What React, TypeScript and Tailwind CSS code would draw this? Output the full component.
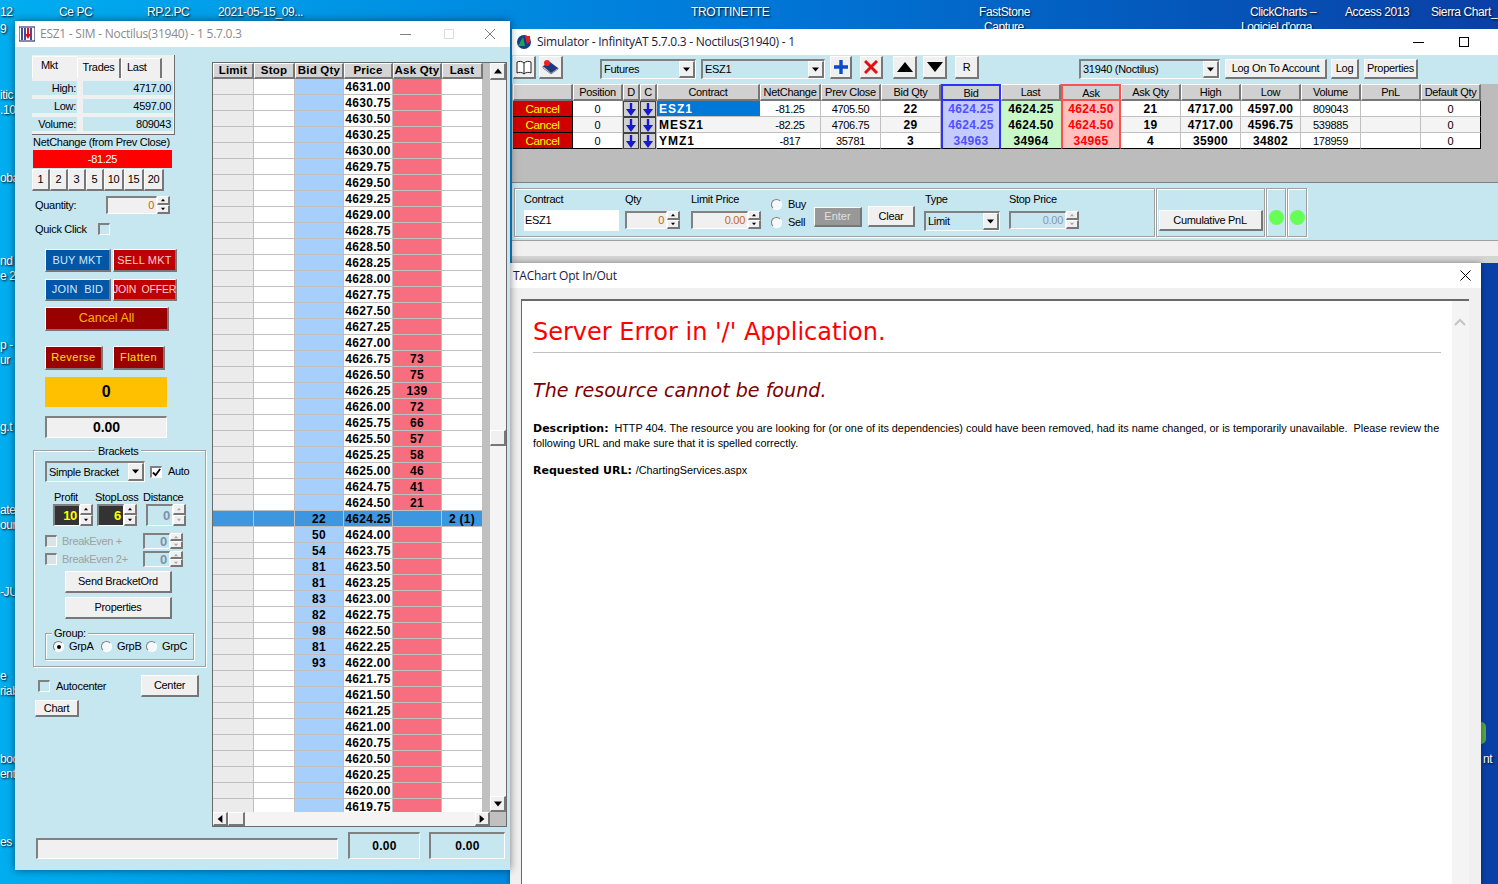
import React from "react";

const raised = "border-t border-l border-r-2 border-b-2 border-t-white border-l-white border-r-[#777777] border-b-[#777777]";
const sunken = "border-t-2 border-l-2 border-r border-b border-t-[#808080] border-l-[#808080] border-r-white border-b-white";
const etched = "border border-[#a0a0a0] shadow-[inset_1px_1px_0_#ffffff,1px_1px_0_#ffffff]";
const bold = "font-bold text-[12px] tracking-[0.3px]";

function Tri({ dir = "down", color = "#000", s = 5 }: { dir?: "up" | "down" | "left" | "right"; color?: string; s?: number }) {
  const p = { up: "0,8 5,2 10,8", down: "0,2 5,8 10,2", left: "8,0 2,5 8,10", right: "2,0 8,5 2,10" }[dir];
  return (
    <svg width={s} height={s} viewBox="0 0 10 10" className="block">
      <polygon points={p} fill={color} />
    </svg>
  );
}

function Btn({ className = "", children }: { className?: string; children?: React.ReactNode }) {
  return <div className={`flex items-center justify-center whitespace-nowrap bg-[#f0f0f0] ${raised} ${className}`}>{children}</div>;
}

function Spinner({ disabled = false, h = 18 }: { disabled?: boolean; h?: number }) {
  const c = disabled ? "#a8a8a8" : "#000";
  return (
    <div className="flex flex-col w-[13px] shrink-0" style={{ height: h }}>
      <Btn className="flex-1 min-h-0"><Tri dir="up" color={c} s={4} /></Btn>
      <Btn className="flex-1 min-h-0"><Tri dir="down" color={c} s={4} /></Btn>
    </div>
  );
}

function SpinInput({ w, h = 18, value, box = "bg-[#f0f0f0] text-[#c06a10]", disabled = false }: { w: string; h?: number; value: string; box?: string; disabled?: boolean }) {
  return (
    <div className="flex">
      <div className={`flex items-center justify-end pr-[2px] ${sunken} ${box} ${w}`} style={{ height: h }}>{value}</div>
      <Spinner disabled={disabled} h={h} />
    </div>
  );
}

function Select({ className = "", children }: { className?: string; children?: React.ReactNode }) {
  return (
    <div className={`flex items-center justify-between pl-[2px] bg-[#c6e6f0] ${sunken} ${className}`}>
      <span className="whitespace-nowrap">{children}</span>
      <Btn className="w-[16px] h-full shrink-0"><Tri s={7} /></Btn>
    </div>
  );
}

function Check({ checked = false, disabled = false }: { checked?: boolean; disabled?: boolean }) {
  return (
    <div className={`w-[12px] h-[12px] shrink-0 flex items-center justify-center ${sunken} ${disabled ? "bg-[#d8e4e8]" : "bg-[#c6e6f0]"} ${checked ? "bg-white" : ""}`}>
      {checked && (
        <svg width="9" height="9" viewBox="0 0 10 10"><path d="M1 5l3 3 5-7" fill="none" stroke="#000" strokeWidth="2" /></svg>
      )}
    </div>
  );
}

function Radio({ on = false }: { on?: boolean }) {
  return (
    <div className="w-[11px] h-[11px] rounded-full bg-[#f4f8fa] border border-t-[#808080] border-l-[#808080] border-r-white border-b-white flex items-center justify-center shrink-0">
      {on && <div className="w-[4px] h-[4px] rounded-full bg-black" />}
    </div>
  );
}

const ask: Record<string, string> = { "4626.75": "73", "4626.50": "75", "4626.25": "139", "4626.00": "72", "4625.75": "66", "4625.50": "57", "4625.25": "58", "4625.00": "46", "4624.75": "41", "4624.50": "21" };
const bid: Record<string, string> = { "4624.25": "22", "4624.00": "50", "4623.75": "54", "4623.50": "81", "4623.25": "81", "4623.00": "83", "4622.75": "82", "4622.50": "98", "4622.25": "81", "4622.00": "93" };
const prices = Array.from({ length: 46 }, (_, i) => (4631 - i * 0.25).toFixed(2));

function Ladder() {
  const hd = `flex items-center justify-center whitespace-nowrap bg-[#d4d4d4] h-[16px] ${raised}`;
  const cell = "h-[16px] border-r border-b border-[#c0c0c0] flex items-center justify-center";
  return (
    <div className="w-[295px] h-[765px] border border-[#6a6a6a] mt-[15px] flex flex-col bg-[#c0c0c0]">
      <div className="flex h-[749px]">
        <div className="w-[277px] overflow-hidden flex flex-col">
          <div className="flex shrink-0 w-[270px] font-bold text-[11.5px] tracking-[0.2px]">
            <div className={`${hd} w-[41px]`}>Limit</div>
            <div className={`${hd} w-[41px]`}>Stop</div>
            <div className={`${hd} w-[49px]`}>Bid Qty</div>
            <div className={`${hd} w-[49px]`}>Price</div>
            <div className={`${hd} w-[49px]`}>Ask Qty</div>
            <div className={`${hd} w-[41px]`}>Last</div>
          </div>
          {prices.map((p) => {
            const hi = p === "4624.25";
            return (
              <div key={p} className={`flex shrink-0 w-[270px] ${bold}`}>
                <div className={`${cell} w-[41px] ${hi ? "bg-[#3c96e0]" : "bg-[#ebebeb]"}`} />
                <div className={`${cell} w-[41px] ${hi ? "bg-[#3c96e0]" : "bg-white"}`} />
                <div className={`${cell} w-[49px] ${hi ? "bg-[#3c96e0]" : "bg-[#a6d0fb]"}`}>{bid[p]}</div>
                <div className={`${cell} w-[49px] ${hi ? "bg-[#3c96e0]" : "bg-white"}`}>{p}</div>
                <div className={`${cell} w-[49px] ${hi ? "bg-[#3c96e0]" : "bg-[#f76e81]"}`}>{ask[p]}</div>
                <div className={`${cell} w-[41px] ${hi ? "bg-[#3c96e0]" : "bg-white"}`}>{hi ? "2 (1)" : ""}</div>
              </div>
            );
          })}
        </div>
        <div className="w-[16px] flex flex-col bg-[#f4f4f4]">
          <Btn className="h-[17px] shrink-0"><Tri dir="up" s={8} /></Btn>
          <div className="h-[350px]" />
          <Btn className="h-[16px] shrink-0" />
          <div className="flex-1" />
          <Btn className="h-[16px] shrink-0"><Tri dir="down" s={8} /></Btn>
        </div>
      </div>
      <div className="flex h-[14px]">
        <Btn className="w-[15px]"><Tri dir="left" s={8} /></Btn>
        <Btn className="w-[17px]" />
        <div className="flex-1 bg-[#f4f4f4]" />
        <Btn className="w-[15px]"><Tri dir="right" s={8} /></Btn>
        <div className="w-[16px] bg-[#c0c0c0]" />
      </div>
    </div>
  );
}

function LeftColumn() {
  const statRow = "flex h-[14px] mb-[4px]";
  const statL = "w-[45px] bg-[#c6e6f0] text-right pr-[1px] leading-[14px]";
  const statV = "w-[90px] ml-[6px] bg-[#c6e6f0] text-right pr-[2px] leading-[14px]";
  const redBtn = "!bg-[#9a0000] text-[#ffe000] tracking-[0.5px]";
  return (
    <div className="w-[197px] shrink-0 flex flex-col">
      <div className="ml-[17px] mt-[8px] w-[143px] h-[80px] bg-[#f0f0f0] flex flex-col border-r border-b border-r-[#707070] border-b-[#707070]">
        <div className="flex h-[23px] shrink-0 pt-[1px]">
          <div className="w-[45px] h-[22px] pl-[8px] leading-[16px] bg-[#f0f0f0] border-t border-l border-white">Mkt</div>
          <div className="w-[44px] h-[20px] mt-[2px] text-center leading-[16px] border-t border-l border-r-2 border-t-white border-l-white border-r-[#777777]">Trades</div>
          <div className="w-[41px] h-[20px] mt-[2px] pl-[5px] leading-[16px] border-t border-l border-r-2 border-t-white border-l-white border-r-[#777777]">Last</div>
        </div>
        <div className={`${statRow} mt-[3px]`}><div className={statL}>High:</div><div className={statV}>4717.00</div></div>
        <div className={statRow}><div className={statL}>Low:</div><div className={statV}>4597.00</div></div>
        <div className={statRow}><div className={statL}>Volume:</div><div className={statV}>809043</div></div>
      </div>
      <div className="ml-[18px] h-[15px] leading-[15px] whitespace-nowrap">NetChange (from Prev Close)</div>
      <div className="ml-[18px] w-[139px] h-[18px] bg-[#ff0000] text-white text-center leading-[18px]">-81.25</div>
      <div className="ml-[17px] mt-[1px] flex h-[22px]">
        {["1", "2", "3", "5"].map((t) => <Btn key={t} className="w-[18px]">{t}</Btn>)}
        {["10", "15", "20"].map((t) => <Btn key={t} className="w-[20px]">{t}</Btn>)}
      </div>
      <div className="ml-[20px] mt-[5px] flex items-center h-[18px]">
        <div className="w-[71px]">Quantity:</div>
        <SpinInput w="w-[51px]" value="0" />
      </div>
      <div className="ml-[20px] mt-[9px] flex items-center h-[12px]">
        <div className="w-[63px] whitespace-nowrap">Quick Click</div>
        <Check />
      </div>
      <div className="ml-[30px] mt-[14px] flex gap-[2px] h-[23px] tracking-[0.2px]">
        <Btn className="w-[66px] !bg-[#0057a8] text-[#d0e8ff]">BUY MKT</Btn>
        <Btn className="w-[64px] !bg-[#c00000] text-[#ffd0d0]">SELL MKT</Btn>
      </div>
      <div className="ml-[30px] mt-[7px] flex gap-[2px] h-[22px]">
        <Btn className="w-[66px] !bg-[#0057a8] text-[#d0e8ff] tracking-[0.2px]">JOIN&nbsp;&nbsp;BID</Btn>
        <Btn className="w-[64px] !bg-[#c00000] text-[#ffd0d0] text-[10.5px] tracking-[-0.2px]">JOIN&nbsp;&nbsp;OFFER</Btn>
      </div>
      <Btn className="ml-[30px] mt-[6px] w-[124px] h-[24px] !bg-[#990000] text-[#ffb400] text-[12.5px] tracking-normal">Cancel All</Btn>
      <div className="ml-[30px] mt-[15px] flex gap-[10px] h-[24px]">
        <Btn className={`w-[58px] ${redBtn}`}>Reverse</Btn>
        <Btn className={`w-[52px] ${redBtn}`}>Flatten</Btn>
      </div>
      <div className="ml-[30px] mt-[7px] w-[122px] h-[30px] bg-[#ffc000] flex items-center justify-center text-[16px] font-bold">0</div>
      <div className={`ml-[30px] mt-[9px] w-[122px] h-[22px] bg-[#f0f0f0] flex items-center justify-center text-[14px] tracking-normal ${sunken} font-bold`}>0.00</div>

      <div className={`relative ml-[18px] mt-[12px] w-[173px] h-[217px] ${etched}`}>
        <div className="absolute left-[61px] -top-[7px] px-[3px] bg-[#c6e6f0] leading-[14px]">Brackets</div>
        <div className="flex items-center ml-[11px] mt-[10px] h-[21px]">
          <Select className="w-[100px] h-[21px]">Simple Bracket</Select>
          <div className="ml-[5px]"><Check checked /></div>
          <div className="ml-[6px]">Auto</div>
        </div>
        <div className="flex mt-[8px] h-[14px] leading-[14px]">
          <div className="ml-[20px] w-[41px]">Profit</div>
          <div className="w-[48px] whitespace-nowrap">StopLoss</div>
          <div>Distance</div>
        </div>
        <div className="flex ml-[19px] gap-[4px]">
          <SpinInput w="w-[27px]" h={22} value="10" box="bg-[#333333] text-[#ffff00] font-bold text-[13px]" />
          <SpinInput w="w-[27px]" h={22} value="6" box="bg-[#333333] text-[#ffff00] font-bold text-[13px]" />
          <div className="ml-[5px]"><SpinInput w="w-[27px]" h={22} disabled value="0" box="text-[#8090a8] font-bold text-[13px]" /></div>
        </div>
        <div className="flex items-center ml-[11px] mt-[7px] h-[16px] text-[#a0a0a0]">
          <Check disabled />
          <div className="ml-[5px] w-[81px] whitespace-nowrap">BreakEven +</div>
          <SpinInput w="w-[27px]" h={16} disabled value="0" box="text-[#8090a8] font-bold text-[13px]" />
        </div>
        <div className="flex items-center ml-[11px] mt-[2px] h-[16px] text-[#a0a0a0]">
          <Check disabled />
          <div className="ml-[5px] w-[81px] whitespace-nowrap">BreakEven 2+</div>
          <SpinInput w="w-[27px]" h={16} disabled value="0" box="text-[#8090a8] font-bold text-[13px]" />
        </div>
        <Btn className="ml-[31px] mt-[4px] w-[107px] h-[22px]">Send BracketOrd</Btn>
        <Btn className="ml-[31px] mt-[4px] w-[107px] h-[22px]">Properties</Btn>
        <div className={`relative ml-[11px] mt-[14px] w-[149px] h-[27px] ${etched} flex items-center pl-[7px]`}>
          <div className="absolute left-[6px] -top-[7px] px-[2px] bg-[#c6e6f0] leading-[12px]">Group:</div>
          <Radio on /><div className="ml-[5px] w-[32px]">GrpA</div>
          <Radio /><div className="ml-[5px] w-[29px]">GrpB</div>
          <Radio /><div className="ml-[5px]">GrpC</div>
        </div>
      </div>

      <div className="flex ml-[23px] mt-[8px] h-[22px]">
        <div className="mt-[5px]"><Check /></div>
        <div className="ml-[6px] mt-[5px] w-[85px] leading-[13px]">Autocenter</div>
        <Btn className="w-[58px] h-[22px]">Center</Btn>
      </div>
      <Btn className="ml-[20px] mt-[3px] w-[44px] h-[17px]">Chart</Btn>
    </div>
  );
}

function LeftWindow() {
  return (
    <div className="absolute left-[15px] top-[21px] w-[495px] h-[849px] flex flex-col bg-[#c6e6f0] shadow-[0_0_8px_rgba(0,0,0,0.5)]">
      <div className="h-[26px] bg-white flex items-center shrink-0 text-[12px] text-[#8a8a8a]">
        <svg width="16" height="16" viewBox="0 0 16 16" className="ml-[4px]">
          <rect x="0" y="1" width="16" height="14" fill="#fff" stroke="#101070" />
          <path d="M3 2v12M6 2v12M12 2v12" stroke="#101070" strokeWidth="1.5" />
          <path d="M9 2v8" stroke="#e01010" strokeWidth="2" />
          <path d="M6 8h6l-3 5z" fill="#e01010" />
        </svg>
        <span className="ml-[5px] font-['Open_Sans',sans-serif] tracking-[-0.25px]">ESZ1 - SIM - Noctilus(31940) - 1 5.7.0.3</span>
        <div className="ml-auto flex items-center">
          <div className="w-[11px] h-[1px] bg-[#808080] mr-[33px]" />
          <div className="w-[10px] h-[10px] border border-[#dcdcdc] mr-[30px]" />
          <svg width="12" height="12" viewBox="0 0 12 12" className="mr-[14px]"><path d="M1 1l10 10M11 1L1 11" stroke="#808080" /></svg>
        </div>
      </div>
      <div className="flex h-[781px] shrink-0">
        <LeftColumn />
        <Ladder />
      </div>
      <div className="flex pt-[4px] items-start">
        <div className={`ml-[21px] mt-[6px] w-[302px] h-[21px] bg-[#f0f0f0] ${sunken}`} />
        <div className={`ml-[10px] w-[72px] h-[27px] ${sunken} flex items-center justify-center ${bold}`}>0.00</div>
        <div className={`ml-[9px] w-[76px] h-[27px] ${sunken} flex items-center justify-center ${bold}`}>0.00</div>
      </div>
    </div>
  );
}

const cols = [60, 50, 17, 17, 103, 61, 60, 60, 60, 60, 60, 60, 60, 60, 60, 60, 60];
const heads = ["", "Position", "D", "C", "Contract", "NetChange", "Prev Close", "Bid Qty", "Bid", "Last", "Ask", "Ask Qty", "High", "Low", "Volume", "PnL", "Default Qty"];
const rows = [
  ["ESZ1", "-81.25", "4705.50", "22", "4624.25", "4624.25", "4624.50", "21", "4717.00", "4597.00", "809043"],
  ["MESZ1", "-82.25", "4706.75", "29", "4624.25", "4624.50", "4624.50", "19", "4717.00", "4596.75", "539885"],
  ["YMZ1", "-817", "35781", "3", "34963", "34964", "34965", "4", "35900", "34802", "178959"],
];

function ArrowBtn() {
  return (
    <div className="w-[16px] h-[16px] bg-[#d0d0d0] border border-[#404040] flex items-center justify-center">
      <svg width="10" height="13" viewBox="0 0 10 13"><path d="M5 0v8" stroke="#1818d0" strokeWidth="2.4" /><path d="M0 6h10l-5 7z" fill="#1818d0" /></svg>
    </div>
  );
}

function QuoteGrid() {
  const hd = (i: number) =>
    i === 8
      ? "border-2 border-[#3030ff] bg-[#d0d0d0]"
      : i === 10
        ? "border-2 border-[#ff5050] bg-[#d0d0d0]"
        : `bg-[#d0d0d0] ${raised}`;
  return (
    <div className="w-[968px] ml-[1px]">
      <div className="flex h-[17px]">
        {heads.map((h, i) => (
          <div key={i} className={`${hd(i)} h-[17px] pt-[1px] flex items-center justify-center whitespace-nowrap`} style={{ width: cols[i] }}>{h}</div>
        ))}
      </div>
      {rows.map((r, ri) => {
        const frame = `h-[16px] flex items-center justify-center border-r border-b border-[#c0c0c0] ${ri === 2 ? "border-b-black" : ""} ${ri === 1 ? "bg-[#f4f4f4]" : "bg-white"}`;
        const base = `${frame} pt-[2px]`;
        const strong = `${frame} ${bold}`;
        const colour = `h-[16px] w-[60px] flex items-center justify-center ${bold} ${ri === 2 ? "border-b border-b-black" : ""}`;
        return (
          <div key={ri} className="flex h-[16px]">
            <div className="w-[60px] h-[16px] pt-[2px] bg-[#d00000] text-[#ffff00] flex items-center justify-center border-r border-b border-black text-[11.5px]">Cancel</div>
            <div className={`${base} w-[50px]`}>0</div>
            <div className="w-[17px]"><ArrowBtn /></div>
            <div className="w-[17px]"><ArrowBtn /></div>
            <div className={`h-[16px] w-[103px] flex items-center pl-[2px] ${bold} tracking-[1px] border-b ${ri === 2 ? "border-b-black" : "border-b-[#c0c0c0]"} ${ri === 0 ? "bg-[#0078d7] text-white" : ri === 1 ? "bg-[#f4f4f4]" : "bg-white"}`}>{r[0]}</div>
            <div className={`${base} w-[61px]`}>{r[1]}</div>
            <div className={`${base} w-[60px]`}>{r[2]}</div>
            <div className={`${strong} w-[60px]`}>{r[3]}</div>
            <div className={`${colour} bg-[#c4ccff] text-[#5050ff] border-x-2 border-[#3030ff]`}>{r[4]}</div>
            <div className={`${colour} bg-[#c8f8c8]`}>{r[5]}</div>
            <div className={`${colour} bg-[#ffc0c0] text-[#ff0000] border-x-2 border-[#ff5050]`}>{r[6]}</div>
            <div className={`${strong} w-[60px]`}>{r[7]}</div>
            <div className={`${strong} w-[60px]`}>{r[8]}</div>
            <div className={`${strong} w-[60px]`}>{r[9]}</div>
            <div className={`${base} w-[60px]`}>{r[10]}</div>
            <div className={`${base} w-[60px]`} />
            <div className={`${base} w-[60px] !border-r-black`}>0</div>
          </div>
        );
      })}
    </div>
  );
}

function SimWindow() {
  return (
    <div className="absolute left-[512px] top-[29px] w-[986px] h-[234px] flex flex-col bg-[#c6e6f0]">
      <div className="h-[26px] bg-white flex items-center shrink-0 text-[12px]">
        <svg width="16" height="16" viewBox="0 0 16 16" className="ml-[4px]">
          <circle cx="8" cy="8" r="7" fill="#1a3a8a" />
          <path d="M2 12l5-9 2 9z" fill="#20a060" />
          <path d="M9 2h5v6l-3 2z" fill="#e02020" />
        </svg>
        <span className="ml-[5px] font-['Open_Sans',sans-serif] text-[#1a1a40] tracking-[-0.25px]">Simulator - InfinityAT 5.7.0.3 - Noctilus(31940) - 1</span>
        <div className="ml-auto flex items-center">
          <div className="w-[11px] h-[1px] bg-black mr-[35px]" />
          <div className="w-[10px] h-[10px] border border-black mr-[29px]" />
        </div>
      </div>
      <div className="h-[29px] shrink-0 flex items-start">
        <Btn className="ml-[1px] mt-[1px] w-[23px] h-[23px]">
          <svg width="16" height="15" viewBox="0 0 16 15"><path d="M8 3C6 1 3 1 1 2v11c2-1 5-1 7 1 2-2 5-2 7-1V2c-2-1-5-1-7 1zM8 3v11" fill="#fff" stroke="#202020" /></svg>
        </Btn>
        <Btn className="ml-[3px] mt-[1px] w-[24px] h-[23px]">
          <svg width="17" height="16" viewBox="0 0 17 16"><path d="M1 7l7-4 8 6-7 5z" fill="#1a3a80" /><path d="M1 7v2l8 6 7-5V9l-7 5z" fill="#e8e8e8" stroke="#202040" strokeWidth="0.5" /><circle cx="5" cy="4" r="3" fill="#f02020" /></svg>
        </Btn>
        <Select className="ml-[37px] mt-[4px] w-[96px] h-[20px]">Futures</Select>
        <Select className="ml-[5px] mt-[4px] w-[124px] h-[20px]">ESZ1</Select>
        <Btn className="ml-[5px] mt-[1px] w-[22px] h-[23px]">
          <svg width="14" height="14" viewBox="0 0 14 14"><path d="M7 0v14M0 7h14" stroke="#0a4ad0" strokeWidth="3.4" /></svg>
        </Btn>
        <Btn className="ml-[8px] mt-[1px] w-[23px] h-[23px]">
          <svg width="14" height="14" viewBox="0 0 14 14"><path d="M1 1l12 12M13 1L1 13" stroke="#e01010" strokeWidth="3" /></svg>
        </Btn>
        <Btn className="ml-[10px] mt-[1px] w-[24px] h-[23px]">
          <svg width="16" height="10" viewBox="0 0 16 10"><polygon points="0,10 8,0 16,10" fill="#000" /></svg>
        </Btn>
        <Btn className="ml-[6px] mt-[1px] w-[24px] h-[23px]">
          <svg width="16" height="10" viewBox="0 0 16 10"><polygon points="0,0 8,10 16,0" fill="#000" /></svg>
        </Btn>
        <Btn className="ml-[8px] mt-[1px] w-[24px] h-[23px]">R</Btn>
        <Select className="ml-[100px] mt-[4px] w-[141px] h-[20px]">31940 (Noctilus)</Select>
        <Btn className="ml-[5px] mt-[4px] w-[102px] h-[20px]">Log On To Account</Btn>
        <Btn className="ml-[4px] mt-[4px] w-[28px] h-[20px]">Log</Btn>
        <Btn className="ml-[5px] mt-[4px] w-[54px] h-[20px]">Properties</Btn>
      </div>
      <div className="h-[99px] shrink-0 bg-[#bcbcbc] border-b border-[#808080]">
        <QuoteGrid />
      </div>
      <div className="h-[58px] shrink-0 flex pt-[5px] border-b border-[#a0a0a0]">
        <div className={`ml-[2px] w-[641px] h-[49px] ${etched} flex pl-[9px] pt-[3px]`}>
          <div className="w-[101px]">
            <div className="h-[14px] leading-[14px]">Contract</div>
            <div className="mt-[4px] w-[95px] h-[21px] bg-white pl-[1px] leading-[21px]">ESZ1</div>
          </div>
          <div className="w-[66px]">
            <div className="h-[14px] leading-[14px]">Qty</div>
            <div className="mt-[5px]"><SpinInput w="w-[42px]" value="0" /></div>
          </div>
          <div className="w-[80px]">
            <div className="h-[14px] leading-[14px]">Limit Price</div>
            <div className="mt-[5px]"><SpinInput w="w-[57px]" value="0.00" /></div>
          </div>
          <div className="w-[43px] flex flex-col gap-[6px] pt-[6px] leading-[12px]">
            <div className="flex items-center h-[12px]"><Radio /><span className="ml-[6px]">Buy</span></div>
            <div className="flex items-center h-[12px]"><Radio /><span className="ml-[6px]">Sell</span></div>
          </div>
          <Btn className="mt-[15px] w-[48px] h-[20px] !bg-[#989898] text-[#e0e0e0] tracking-normal">Enter</Btn>
          <Btn className="ml-[6px] mt-[14px] w-[47px] h-[21px]">Clear</Btn>
          <div className="ml-[9px] w-[85px]">
            <div className="h-[14px] leading-[14px] ml-[1px]">Type</div>
            <Select className="mt-[5px] w-[76px] h-[20px]">Limit</Select>
          </div>
          <div>
            <div className="h-[14px] leading-[14px] whitespace-nowrap">Stop Price</div>
            <div className="mt-[5px]"><SpinInput w="w-[57px]" disabled value="0.00" box="text-[#8a98a8]" /></div>
          </div>
        </div>
        <div className={`ml-[1px] w-[109px] h-[49px] ${etched} flex items-center justify-center pt-[16px]`}>
          <Btn className="w-[104px] h-[21px]">Cumulative PnL</Btn>
        </div>
        <div className={`ml-[1px] w-[20px] h-[49px] ${etched} flex items-center justify-center pt-[10px]`}>
          <div className="w-[15px] h-[15px] rounded-full bg-[#66ff55]" />
        </div>
        <div className={`ml-[1px] w-[20px] h-[49px] ${etched} flex items-center justify-center pt-[10px]`}>
          <div className="w-[15px] h-[15px] rounded-full bg-[#66ff55]" />
        </div>
      </div>
      <div className="h-[22px] shrink-0 flex flex-col">
        <div className="h-[15px] bg-[#f0f0f0]" />
        <div className="h-[7px] bg-[#d4d4d4]" />
      </div>
    </div>
  );
}

function ChartWindow() {
  return (
    <div className="absolute left-[510px] top-[263px] w-[971px] h-[621px] flex flex-col bg-[#f0f0f0] shadow-[0_0_6px_rgba(0,0,0,0.4)]">
      <div className="h-[25px] bg-white flex items-center shrink-0 text-[12px] text-[#1a1a40]">
        <span className="ml-[3px] font-['Open_Sans',sans-serif] tracking-[-0.25px]">TAChart Opt In/Out</span>
        <svg width="11" height="11" viewBox="0 0 11 11" className="ml-auto mr-[10px]"><path d="M0.5 0.5l10 10M10.5 0.5l-10 10" stroke="#000" /></svg>
      </div>
      <div className="flex-1 flex mt-[11px] ml-[11px] mr-[12px] border-t-2 border-l border-[#696969] bg-white min-h-0 tracking-normal">
        <div className="flex-1 pl-[11px] pr-[11px] pt-[16px] font-['DejaVu_Sans',Verdana,sans-serif]">
          <h1 className="text-[24px] leading-[30px] text-[#ff0000] font-normal">Server Error in '/' Application.</h1>
          <div className="h-[1px] bg-[#c0c0c0] mt-[5px]" />
          <h2 className="mt-[26px] text-[19.1px] leading-[24px] italic text-[#800000] font-normal">The resource cannot be found.</h2>
          <p className="mt-[18px] text-[10.85px] leading-[14px] text-black font-['Liberation_Sans',Arial,sans-serif]">
            <b className="font-['DejaVu_Sans',Verdana,sans-serif] text-[11px] mr-[2px]">Description: </b>
            HTTP 404. The resource you are looking for (or one of its dependencies) could have been removed, had its name changed, or is temporarily unavailable.&nbsp; Please review the<br />
            following URL and make sure that it is spelled correctly.
          </p>
          <p className="mt-[13px] text-[10.85px] leading-[14px] text-black font-['Liberation_Sans',Arial,sans-serif]">
            <b className="font-['DejaVu_Sans',Verdana,sans-serif] text-[11px]">Requested URL: </b>/ChartingServices.aspx
          </p>
        </div>
        <div className="w-[17px] bg-[#f4f4f4] flex justify-center pt-[17px] pr-[2px] shrink-0">
          <svg width="12" height="8" viewBox="0 0 12 8" className="block"><path d="M1 7l5-5 5 5" fill="none" stroke="#c4c4c4" strokeWidth="2" /></svg>
        </div>
      </div>
    </div>
  );
}

const icon = "absolute whitespace-nowrap text-white text-[12px] leading-[15px] [text-shadow:1px_1px_2px_#000] font-['Liberation_Sans',sans-serif] tracking-[-0.4px]";

export default function App() {
  return (
    <div className="relative w-[1498px] h-[884px] overflow-hidden bg-gradient-to-r from-[#00aef0] via-[#0078d8] to-[#0a3fa6] text-black text-[11px] tracking-[-0.3px] font-['Liberation_Sans',Arial,sans-serif]">
      <div className={`${icon} left-[0px] top-[5px]`}>12</div>
      <div className={`${icon} left-[59px] top-[5px]`}>Ce PC</div>
      <div className={`${icon} left-[147px] top-[5px]`}>RP.2.PC</div>
      <div className={`${icon} left-[218px] top-[5px]`}>2021-05-15_09...</div>
      <div className={`${icon} left-[691px] top-[5px]`}>TROTTINETTE</div>
      <div className={`${icon} left-[979px] top-[5px]`}>FastStone</div>
      <div className={`${icon} left-[984px] top-[20px]`}>Capture</div>
      <div className={`${icon} left-[1250px] top-[5px]`}>ClickCharts –</div>
      <div className={`${icon} left-[1241px] top-[20px]`}>Logiciel d'orga</div>
      <div className={`${icon} left-[1345px] top-[5px]`}>Access 2013</div>
      <div className={`${icon} left-[1431px] top-[5px]`}>Sierra Chart_</div>
      <div className={`${icon} left-[0px] top-[22px]`}>9</div>
      <div className={`${icon} left-[0px] top-[88px]`}>itic</div>
      <div className={`${icon} left-[0px] top-[103px]`}>.10</div>
      <div className={`${icon} left-[0px] top-[171px]`}>oba</div>
      <div className={`${icon} left-[0px] top-[254px]`}>nd</div>
      <div className={`${icon} left-[0px] top-[269px]`}>e 2.</div>
      <div className={`${icon} left-[0px] top-[338px]`}>p -</div>
      <div className={`${icon} left-[0px] top-[353px]`}>ur</div>
      <div className={`${icon} left-[0px] top-[420px]`}>g.t</div>
      <div className={`${icon} left-[0px] top-[503px]`}>ate</div>
      <div className={`${icon} left-[0px] top-[518px]`}>our</div>
      <div className={`${icon} left-[0px] top-[585px]`}>-JU</div>
      <div className={`${icon} left-[0px] top-[669px]`}>e</div>
      <div className={`${icon} left-[0px] top-[684px]`}>riab</div>
      <div className={`${icon} left-[0px] top-[752px]`}>boo</div>
      <div className={`${icon} left-[0px] top-[767px]`}>ent</div>
      <div className={`${icon} left-[0px] top-[835px]`}>es</div>
      <div className={`${icon} left-[1483px] top-[752px]`}>nt</div>
      <div className="absolute left-[1481px] top-[722px] w-[5px] h-[22px] bg-[#58a848] rounded-r-full" />
      <SimWindow />
      <ChartWindow />
      <LeftWindow />
    </div>
  );
}
